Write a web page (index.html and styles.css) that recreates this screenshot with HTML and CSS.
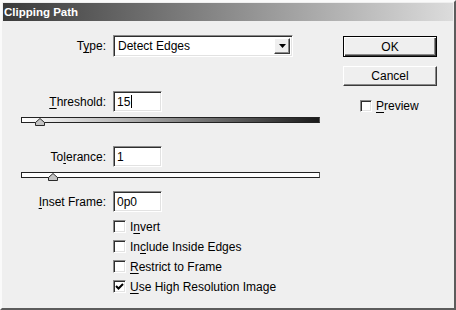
FILE: index.html
```html
<!DOCTYPE html>
<html lang="en">
<head>
    <meta charset="UTF-8">
    <title>Clipping Path</title>
    <link rel="stylesheet" href="styles.css">
</head>
<body>
    <div class="window">
        <div class="titlebar">Clipping Path</div>
        <div class="content">
            <div class="main">
                <div class="row">
                    <label class="lbl">T<u>y</u>pe:</label>
                    <div class="select">
                        <span class="select_value">Detect Edges</span>
                        <span class="select_btn">
                            <svg width="7" height="4" viewBox="0 0 7 4"><path d="M0 0H7L3.5 4Z" fill="#000"/></svg>
                        </span>
                    </div>
                </div>

                <div class="row row_threshold">
                    <label class="lbl"><u>T</u>hreshold:</label>
                    <div class="field">15<span class="caret"></span></div>
                </div>
                <div class="slider slider_dark">
                    <span class="thumb" style="left: 13px"><svg width="10" height="8" viewBox="0 0 10 8"><path d="M0.5 7.5V4.5L5 0.5L9.5 4.5V7.5Z" fill="#c4c4c4" stroke="#2a2a2a"/></svg></span>
                </div>

                <div class="row row_tolerance">
                    <label class="lbl">To<u>l</u>erance:</label>
                    <div class="field">1</div>
                </div>
                <div class="slider">
                    <span class="thumb" style="left: 26px"><svg width="10" height="8" viewBox="0 0 10 8"><path d="M0.5 7.5V4.5L5 0.5L9.5 4.5V7.5Z" fill="#c4c4c4" stroke="#2a2a2a"/></svg></span>
                </div>

                <div class="row row_inset">
                    <label class="lbl"><u>I</u>nset Frame:</label>
                    <div class="field">0p0</div>
                </div>

                <div class="checks">
                    <label class="check"><span class="box"></span>I<u>n</u>vert</label>
                    <label class="check"><span class="box"></span>In<u>c</u>lude Inside Edges</label>
                    <label class="check"><span class="box"></span><u>R</u>estrict to Frame</label>
                    <label class="check"><span class="box"><svg width="9" height="9" viewBox="0 0 9 9"><path d="M1 4L3.5 6.5L8 2" fill="none" stroke="#000" stroke-width="2"/></svg></span><u>U</u>se High Resolution Image</label>
                </div>
            </div>

            <div class="side">
                <button class="btn btn_default" type="button">OK</button>
                <button class="btn btn_cancel" type="button">Cancel</button>
                <label class="check check_preview"><span class="box"></span><u>P</u>review</label>
            </div>
        </div>
    </div>
</body>
</html>
```

FILE: styles.css
```css
body {
    margin: 0;
    background: #efefef;
    font-family: "Liberation Sans", Arial, sans-serif;
    font-size: 12px;
    color: #000;
}
u {
    text-underline-offset: 2px;
}

.window {
    width: 456px;
    height: 310px;
    box-sizing: border-box;
    border-style: solid;
    border-width: 2px;
    border-color: #fafafa #5c5c5c #5c5c5c #fafafa;
    padding: 1px;
    background: #efefef;
}
.titlebar {
    height: 18px;
    line-height: 18px;
    padding-left: 1px;
    background: linear-gradient(to right, #3a3a3a, #dcdcdc);
    color: #fff;
    font-weight: bold;
    font-size: 11.5px;
}

.content {
    display: flex;
}
.main {
    margin-left: 18px;
    width: 299px;
    padding-top: 14px;
}
.side {
    margin-left: 23px;
    padding-top: 15px;
    width: 94px;
}

.row {
    display: flex;
    align-items: center;
}
.lbl {
    width: 85px;
    margin-right: 7px;
    text-align: right;
}
.row_threshold {
    margin-top: 34px;
}
.row_tolerance {
    margin-top: 23px;
}
.row_inset {
    margin-top: 13px;
}

/* sunken controls */
.select, .field, .box {
    box-sizing: border-box;
    background: #fff;
    border: 1px solid;
    border-color: #8a8a8a #fff #fff #8a8a8a;
    box-shadow: inset 1px 1px 0 #2e2e2e, inset -1px -1px 0 #e2e2e2;
}
.select {
    width: 180px;
    height: 22px;
    display: flex;
    align-items: center;
    padding: 0 2px 0 4px;
}
.select_value {
    flex: 1;
}
.select_btn {
    width: 16px;
    height: 16px;
    box-sizing: border-box;
    display: flex;
    align-items: center;
    justify-content: center;
    background: #efefef;
    border: 1px solid;
    border-color: #fff #3a3a3a #3a3a3a #fff;
    box-shadow: inset -1px -1px 0 #8a8a8a;
}
.field {
    width: 49px;
    height: 21px;
    padding: 0 3px;
    display: flex;
    align-items: center;
}
.caret {
    display: inline-block;
    width: 1px;
    height: 13px;
    background: #000;
    margin-left: 1px;
}

.slider {
    position: relative;
    height: 6px;
    margin-top: 5px;
    box-sizing: border-box;
    border: 1px solid #222;
    border-right-color: #555;
    background: #fff;
}
.slider_dark {
    background: linear-gradient(to right, #fff, #bdbdbd 30%, #1a1a1a);
}
.thumb {
    position: absolute;
    top: 0;
    display: block;
    line-height: 0;
}

.checks {
    margin-top: 8px;
    margin-left: 92px;
    display: flex;
    flex-direction: column;
    gap: 7px;
}
.check {
    display: flex;
    align-items: center;
    height: 13px;
}
.box {
    width: 13px;
    height: 13px;
    margin-right: 4px;
    display: flex;
    align-items: center;
    justify-content: center;
}

.btn {
    display: block;
    width: 94px;
    height: 20px;
    box-sizing: border-box;
    font-family: "Liberation Sans", Arial, sans-serif;
    font-size: 12px;
    color: #000;
    background: #efefef;
    border: 1px solid;
    border-color: #fff #3a3a3a #3a3a3a #fff;
    box-shadow: inset -1px -1px 0 #8a8a8a;
    padding: 0;
}
.btn_default {
    height: 21px;
    border: 1px solid #000;
    box-shadow: inset 1px 1px 0 #fff, inset -1px -1px 0 #3a3a3a, inset -2px -2px 0 #8a8a8a;
}
.btn_cancel {
    margin-top: 9px;
}
.check_preview {
    margin-top: 13px;
    margin-left: 17px;
}
.check_preview .box {
    width: 12px;
    height: 12px;
}
```
